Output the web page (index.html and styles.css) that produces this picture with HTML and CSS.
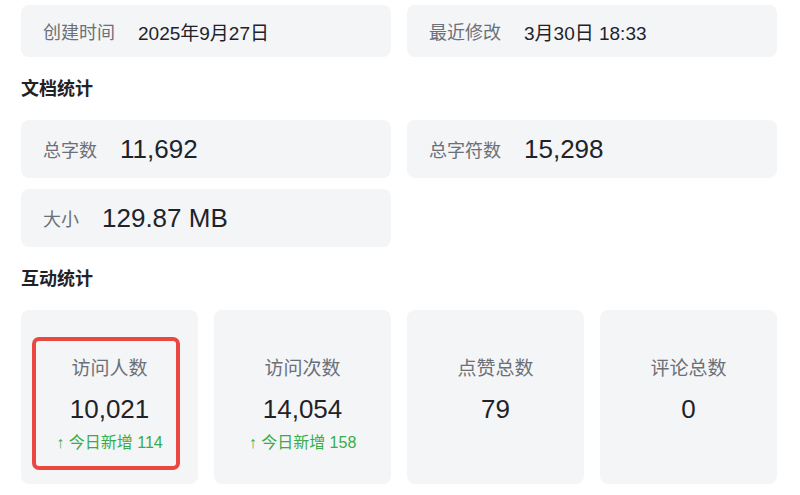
FILE: index.html
```html
<!DOCTYPE html>
<html lang="zh-CN">

<head>
    <meta charset="UTF-8">
    <meta name="viewport" content="width=device-width, initial-scale=1.0">
    <title>文档详情</title>
    <link rel="stylesheet" href="styles.css">
</head>

<body>
    <div class="page">
        <!-- 基本信息 -->
        <div class="grid two">
            <div class="card row">
                <span class="label">创建时间</span>
                <span class="text">2025年9月27日</span>
            </div>
            <div class="card row">
                <span class="label">最近修改</span>
                <span class="text">3月30日 18:33</span>
            </div>
        </div>

        <h3 class="title">文档统计</h3>
        <div class="grid two doc">
            <div class="card row tall">
                <span class="label">总字数</span>
                <span class="num">11,692</span>
            </div>
            <div class="card row tall">
                <span class="label">总字符数</span>
                <span class="num">15,298</span>
            </div>
            <div class="card row tall">
                <span class="label">大小</span>
                <span class="num">129.87 MB</span>
            </div>
        </div>

        <h3 class="title">互动统计</h3>
        <div class="grid four">
            <div class="card stat">
                <div class="label">访问人数</div>
                <div class="num">10,021</div>
                <div class="up">↑ 今日新增 114</div>
                <i class="mark"></i>
            </div>
            <div class="card stat">
                <div class="label">访问次数</div>
                <div class="num">14,054</div>
                <div class="up">↑ 今日新增 158</div>
            </div>
            <div class="card stat">
                <div class="label">点赞总数</div>
                <div class="num">79</div>
            </div>
            <div class="card stat">
                <div class="label">评论总数</div>
                <div class="num">0</div>
            </div>
        </div>
    </div>
</body>

</html>
```

FILE: styles.css
```css
* {
    margin: 0;
    padding: 0;
    box-sizing: border-box;
}

body {
    font-family: "Liberation Sans", "Noto Sans CJK SC", sans-serif;
    color: #1f2329;
    background: #fff;
}

.page {
    padding: 5px 23px 0 21px;
}

.grid {
    display: grid;
    gap: 16px;
}

.two {
    grid-template-columns: 1fr 1fr;
}

.doc {
    row-gap: 11px;
}

.four {
    grid-template-columns: repeat(4, 1fr);
}

.card {
    background: #f4f5f7;
    border-radius: 8px;
}

/* 横向：标签 + 数值 */
.row {
    height: 52px;
    display: flex;
    align-items: center;
    gap: 23px;
    padding: 0 22px;
}

.row.tall {
    height: 58px;
}

.label {
    font-size: 18px;
    color: #6b7078;
}

.text {
    font-size: 19px;
}

.num {
    font-size: 26px;
    line-height: 34px;
}

.title {
    font-size: 18px;
    font-weight: 700;
    line-height: 24px;
    margin: 20px 0 19px;
}

/* 互动统计卡片 */
.stat {
    position: relative;
    height: 174px;
    padding-top: 46px;
    text-align: center;
}

.stat .label {
    font-size: 19px;
    line-height: 26px;
    margin-bottom: 10px;
}

.stat .up {
    font-size: 16px;
    line-height: 22px;
    margin-top: 6px;
    color: #36ad48;
}

/* 红色标注框 */
.mark {
    position: absolute;
    left: 11px;
    right: 18px;
    top: 27px;
    bottom: 14px;
    border: 4px solid #e9473f;
    border-radius: 7px;
}
```
